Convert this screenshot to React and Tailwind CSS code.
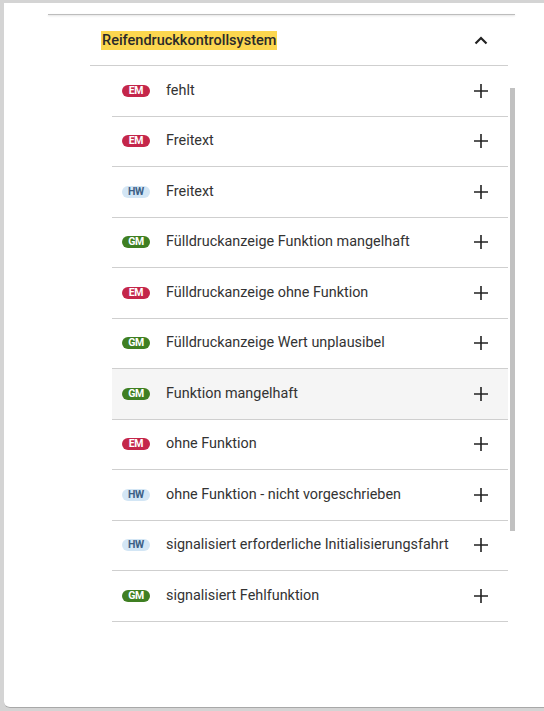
const ITEMS = [
  { tag: 'EM', label: 'fehlt' },
  { tag: 'EM', label: 'Freitext' },
  { tag: 'HW', label: 'Freitext' },
  { tag: 'GM', label: 'Fülldruckanzeige Funktion mangelhaft' },
  { tag: 'EM', label: 'Fülldruckanzeige ohne Funktion' },
  { tag: 'GM', label: 'Fülldruckanzeige Wert unplausibel' },
  { tag: 'GM', label: 'Funktion mangelhaft', hover: true },
  { tag: 'EM', label: 'ohne Funktion' },
  { tag: 'HW', label: 'ohne Funktion - nicht vorgeschrieben' },
  { tag: 'HW', label: 'signalisiert erforderliche Initialisierungsfahrt' },
  { tag: 'GM', label: 'signalisiert Fehlfunktion' },
]

const TAG_STYLES = {
  EM: 'bg-[#c4264a] text-white',
  GM: 'bg-[#3f7f22] text-white',
  HW: 'bg-[#d3e6f5] text-[#3d5f85]',
}

function Badge({ tag }) {
  return (
    <span
      className={`inline-flex items-center justify-center w-[28px] h-[12px] rounded-full text-[10.5px] font-bold leading-none tracking-[-0.3px] ${TAG_STYLES[tag]}`}
    >
      {tag}
    </span>
  )
}

function PlusIcon() {
  return (
    <svg width="16" height="16" viewBox="0 0 16 16" className="text-[#222]">
      <path d="M8 1v14M1 8h14" stroke="currentColor" strokeWidth="1.6" fill="none" />
    </svg>
  )
}

function ChevronUp() {
  return (
    <svg width="14" height="9" viewBox="0 0 14 9" className="text-[#222]">
      <path d="M1.5 7.5L7 2l5.5 5.5" stroke="currentColor" strokeWidth="2.2" fill="none" />
    </svg>
  )
}

export default function App() {
  return (
    <div
      className="w-[544px] h-[711px] bg-[#d4d4d4] pt-[3px] pl-[4px] pb-[3px] overflow-hidden"
      style={{ fontFamily: 'Roboto, "Noto Sans", sans-serif' }}
    >
      <div className="relative h-full bg-white rounded-bl-[6px] border-b border-[#a8a8a8]">
        {/* outer panel edge */}
        <div className="ml-[44px] w-[467px] pt-[11px]">
          <div className="h-px bg-[#bdbdbd] shadow-[0_1px_2px_rgba(0,0,0,0.15)]" />
        </div>

        {/* section */}
        <div className="ml-[86px] w-[418px]">
          <div className="flex items-center justify-between h-[51px] pt-px pl-[11px] pr-[20px] border-b border-[#cfcfcf]">
            <span className="bg-[#fcd74f] text-[14.5px] leading-[19px] text-[#2a2a2a] font-medium px-px">
              Reifendruckkontrollsystem
            </span>
            <ChevronUp />
          </div>

          <ul className="ml-[22px]">
            {ITEMS.map((item, i) => (
              <li
                key={i}
                className={`flex items-center h-[50.5px] border-b border-[#cfcfcf] pl-[10px] pr-[19px] ${
                  item.hover ? 'bg-[#f5f5f5]' : ''
                }`}
              >
                <Badge tag={item.tag} />
                <span className="ml-[16px] flex-1 text-[14.4px] text-[#333] truncate">{item.label}</span>
                <PlusIcon />
              </li>
            ))}
          </ul>
        </div>

        {/* scrollbar thumb */}
        <div className="absolute left-[506px] top-[85px] w-[5px] h-[443px] bg-[#c1c1c1]" />
      </div>
    </div>
  )
}
